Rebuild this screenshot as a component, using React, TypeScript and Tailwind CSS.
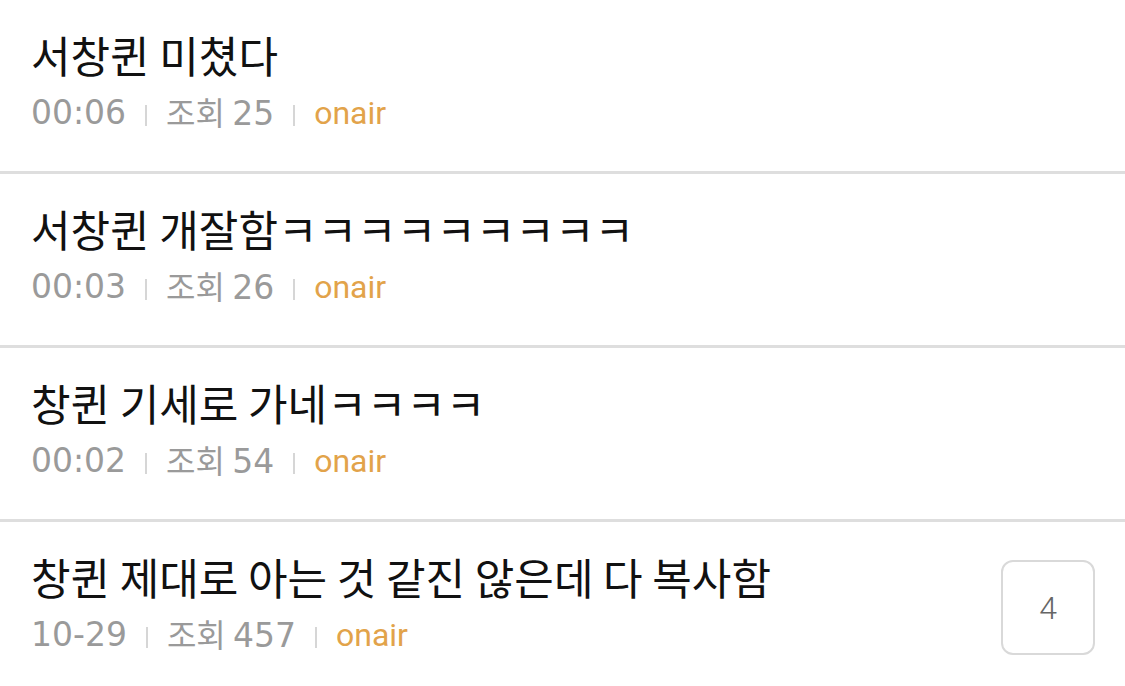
const posts = [
  { title: '서창퀸 미쳤다', time: '00:06', views: 25, comments: 0 },
  { title: '서창퀸 개잘함ㅋㅋㅋㅋㅋㅋㅋㅋㅋ', time: '00:03', views: 26, comments: 0 },
  { title: '창퀸 기세로 가네ㅋㅋㅋㅋ', time: '00:02', views: 54, comments: 0 },
  { title: '창퀸 제대로 아는 것 같진 않은데 다 복사함', time: '10-29', views: 457, comments: 4 },
]

function Sep() {
  return <span className="mx-[19px] mt-[6px] inline-block h-[21px] w-[2px] bg-[#d6d6d6]" />
}

export default function App() {
  return (
    <div className="min-h-screen bg-white font-['Noto_Sans_CJK_KR','Noto_Sans',sans-serif]">
      <ul>
        {posts.map((p) => (
          <li
            key={p.title}
            className="flex h-[174px] items-center border-b-[3px] border-[#dedede] pl-[31px] pr-[30px]"
          >
            <div className="min-w-0 flex-1 self-start pt-[30px]">
              <p className="whitespace-nowrap text-[43px] leading-[48px] text-[#111]">{p.title}</p>
              <p className="mt-[15px] flex items-center text-[32px] leading-[36px] text-[#9a9a9a]">
                <span className="font-['DejaVu_Sans',sans-serif] text-[33px]">{p.time}</span>
                <Sep />
                <span>
                  조회 <span className="font-['DejaVu_Sans',sans-serif] text-[33px]">{p.views}</span>
                </span>
                <Sep />
                <span className="font-['Roboto',sans-serif] text-[#e2a34a]">onair</span>
              </p>
            </div>
            {p.comments > 0 && (
              <div className="flex h-[95px] w-[94px] shrink-0 items-center justify-center rounded-[12px] border-2 border-[#d9d9d9] font-['Roboto',sans-serif] text-[32px] font-light text-[#666]">
                {p.comments}
              </div>
            )}
          </li>
        ))}
      </ul>
    </div>
  )
}
